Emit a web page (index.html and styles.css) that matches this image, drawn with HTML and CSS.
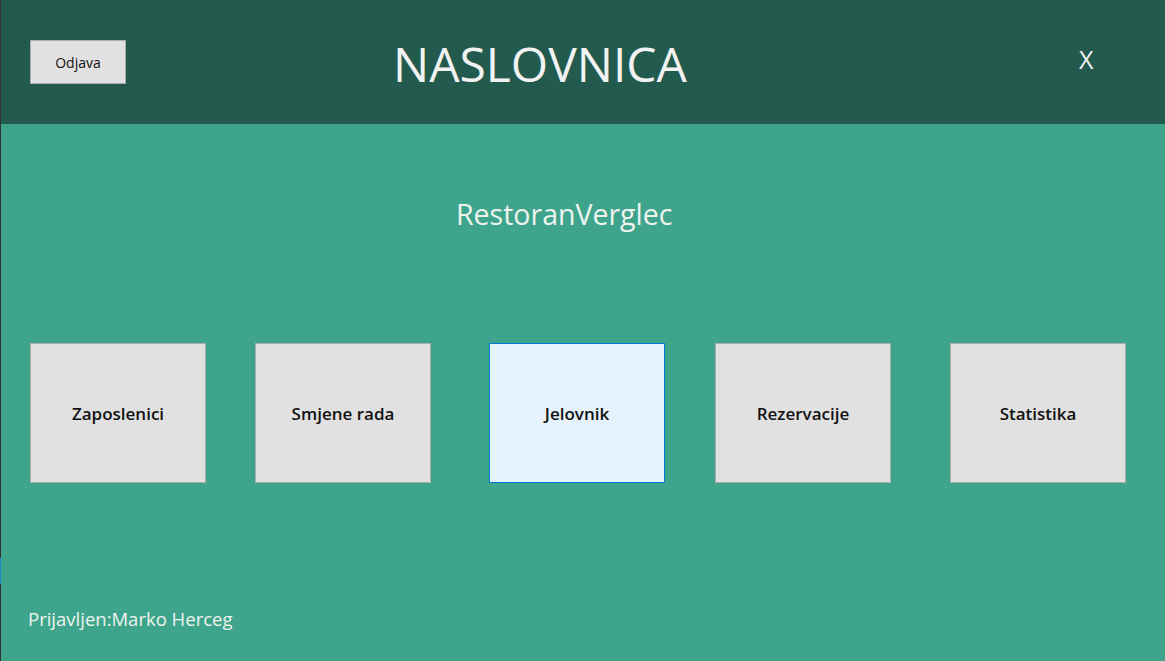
FILE: index.html
```html
<!DOCTYPE html>
<html lang="hr">
<head>
<meta charset="utf-8">
<title>Naslovnica</title>
<link rel="stylesheet" href="styles.css">
</head>
<body>
<div class="window">
  <header class="topbar">
    <button class="btn-logout">Odjava</button>
    <h1 class="title">NASLOVNICA</h1>
    <button class="btn-close">X</button>
  </header>
  <main class="content">
    <h2 class="brand">RestoranVerglec</h2>
    <nav class="tiles">
      <button class="tile">Zaposlenici</button>
      <button class="tile">Smjene rada</button>
      <button class="tile tile-active">Jelovnik</button>
      <button class="tile">Rezervacije</button>
      <button class="tile">Statistika</button>
    </nav>
    <p class="user">Prijavljen:Marko Herceg</p>
  </main>
  <span class="edge-mark"></span>
</div>
</body>
</html>
```
FILE: styles.css
```css
* { box-sizing: border-box; }
html, body { margin: 0; padding: 0; }
body {
  width: 1165px;
  height: 661px;
  overflow: hidden;
  font-family: "Open Sans", "Noto Sans", sans-serif;
}
.window {
  position: relative;
  width: 1165px;
  height: 661px;
  display: flex;
  flex-direction: column;
  border-left: 1px solid #333333;
  background: #3ea58c;
}
.topbar {
  height: 124px;
  flex: none;
  background: #225b4e;
  display: flex;
  align-items: flex-start;
  padding-left: 29px;
}
.btn-logout {
  margin-top: 40px;
  width: 96px;
  height: 44px;
  background: #e1e1e1;
  border: 1px solid #adadad;
  font-family: "Open Sans", sans-serif;
  font-size: 14px;
  color: #111;
  padding: 0;
}
.title {
  margin: 32px 0 0 267px;
  font-size: 48px;
  font-weight: 400;
  line-height: 64px;
  color: #f2f2f2;
  letter-spacing: 0;
}
.btn-close {
  margin: 43px 0 0 392px;
  background: none;
  border: 0;
  padding: 0;
  font-family: "Open Sans", sans-serif;
  font-size: 25px;
  line-height: 32px;
  color: #f2f2f2;
}
.content {
  flex: 1;
  display: flex;
  flex-direction: column;
}
.brand {
  margin: 70px 0 0 455px;
  font-size: 28.5px;
  font-weight: 400;
  line-height: 40px;
  color: #eef3ee;
}
.tiles {
  margin-top: 109px;
  display: flex;
  padding-left: 29px;
}
.tile {
  width: 176px;
  height: 140px;
  flex: none;
  background: #e1e1e1;
  border: 1px solid #adadad;
  font-family: "Open Sans", sans-serif;
  font-size: 17px;
  font-weight: 600;
  color: #111;
  padding: 0;
}
.tile:nth-child(2) { margin-left: 49px; }
.tile:nth-child(3) { margin-left: 58px; }
.tile:nth-child(4) { margin-left: 50px; }
.tile:nth-child(5) { margin-left: 59px; }
.tile-active {
  background: #e5f1fb;
  border-color: #0078d7;
}
.user {
  margin: 123px 0 0 27px;
  font-size: 18.5px;
  font-weight: 400;
  line-height: 26px;
  color: #eef3ee;
}
.edge-mark {
  position: absolute;
  left: -1px;
  top: 558px;
  width: 1px;
  height: 26px;
  background: #1e88d8;
}
```
